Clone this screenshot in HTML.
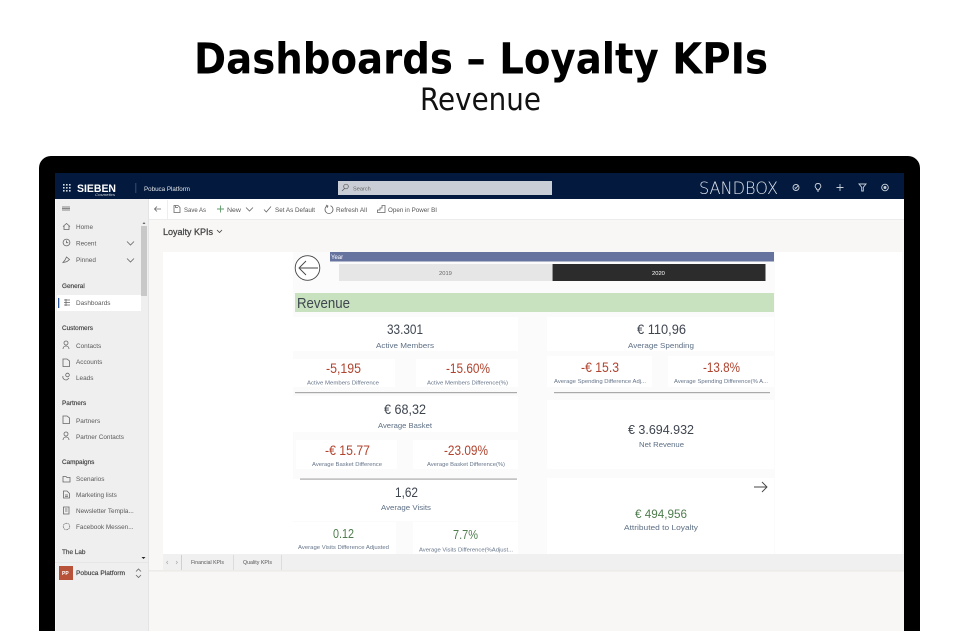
<!DOCTYPE html>
<html><head><meta charset="utf-8"><style>
html,body{margin:0;padding:0;background:#fff;width:960px;height:631px;overflow:hidden}
svg{display:block}
text{font-family:"Liberation Sans",sans-serif}
.n{font-size:6.4px;fill:#5a5a5a}
.h{font-size:6.4px;fill:#444;stroke:#444;stroke-width:.18}
.t{font-size:6.4px;fill:#555}
.big{font-size:13.5px;fill:#3f4650}
.lab{font-size:7.5px;fill:#5d6f85}
.sl{font-size:5.6px;fill:#66758a}
.red{font-size:13.5px;fill:#b0432e}
.grn{font-size:13px;fill:#4f7d4f}
.ic{fill:none;stroke:#666;stroke-width:.8}
.wi{fill:none;stroke:#c9d0da;stroke-width:.9}
.soft{filter:blur(.25px)}
</style></head><body>
<svg width="960" height="631" viewBox="0 0 960 631" xmlns="http://www.w3.org/2000/svg">
<rect width="960" height="631" fill="#fff"/>
<text x="194" y="73.500" textLength="574" lengthAdjust="spacingAndGlyphs" style="font-family:'DejaVu Sans',sans-serif;font-weight:bold;font-size:43px" fill="#000">Dashboards – Loyalty KPIs</text>
<text x="420" y="110" textLength="121" lengthAdjust="spacingAndGlyphs" style="font-family:'DejaVu Sans',sans-serif;font-size:31px" fill="#111">Revenue</text>

<path d="M39 631V168a12 12 0 0 1 12-12H908a12 12 0 0 1 12 12V631Z" fill="#000"/>
<g class="soft">
<rect x="55" y="173" width="849" height="458" fill="#f8f7f6"/>
<rect x="55" y="173" width="849" height="26" fill="#031a3e"/>

<!-- top bar -->
<g fill="#d5dae2"><rect x="63" y="184" width="1.6" height="1.6"/><rect x="66" y="184" width="1.6" height="1.6"/><rect x="69" y="184" width="1.6" height="1.6"/><rect x="63" y="187" width="1.6" height="1.6"/><rect x="66" y="187" width="1.6" height="1.6"/><rect x="69" y="187" width="1.6" height="1.6"/><rect x="63" y="190" width="1.6" height="1.6"/><rect x="66" y="190" width="1.6" height="1.6"/><rect x="69" y="190" width="1.6" height="1.6"/></g>
<text x="77" y="192" textLength="39" lengthAdjust="spacingAndGlyphs" style="font-size:11px;font-weight:bold" fill="#fff">SIEBEN</text>
<text x="95" y="196" textLength="20" lengthAdjust="spacingAndGlyphs" style="font-size:3.5px;font-style:italic" fill="#ddd">Cosmetics</text>
<rect x="135.500" y="183" width=".7" height="10" fill="#55627a"/>
<text x="144" y="191" textLength="46" lengthAdjust="spacingAndGlyphs" style="font-size:6.4px" fill="#e4e7ec">Pobuca Platform</text>
<rect x="338" y="181" width="214" height="14" fill="#c9ced6"/>
<circle cx="346" cy="186.500" r="2.300" fill="none" stroke="#555" stroke-width=".7"/><path d="M344.500 188.500l-2.500 2.500" stroke="#555" stroke-width=".7"/>
<text x="353" y="190.300" style="font-size:5.6px" fill="#666">Search</text>
<text x="699" y="194" textLength="79" lengthAdjust="spacingAndGlyphs" style="font-family:'DejaVu Sans',sans-serif;font-weight:200;font-size:16.500px" fill="#dfe4ec">SANDBOX</text>
<circle cx="796" cy="187.500" r="3" class="wi"/><path d="M794.700 187.500l1 1 2.700-3.200" class="wi"/>
<path d="M818 183.500a2.700 2.700 0 0 1 1.500 5l-.3 1.200h-2.400l-.3-1.200a2.700 2.700 0 0 1 1.500-5ZM817 191h2" class="wi"/>
<path d="M836.500 187.500h7M840 184v7" class="wi"/>
<path d="M859 184h7l-2.700 3.300V191h-1.600v-3.700Z" class="wi"/>
<circle cx="885" cy="187.500" r="3.300" class="wi"/><circle cx="885" cy="187.500" r="1.500" fill="#c9d0da"/>

<!-- sidebar -->
<rect x="55" y="199" width="93" height="432" fill="#efefef"/>
<rect x="55" y="199" width="1" height="432" fill="#f7f7f7"/>
<rect x="148" y="199" width=".8" height="432" fill="#e0e0e0"/>
<rect x="141" y="226" width="6" height="70" fill="#c8c8c8"/>
<path d="M142.500 224l1.500-2 1.500 2Z" fill="#666"/>
<path d="M141.500 557h4l-2 2Z" fill="#222"/>
<path d="M62 207h8M62 208.500h8M62 210h8" stroke="#666" stroke-width=".8"/>

<path d="M63 226.500l3.500-3 3.500 3M64 226v3.500h5V226" class="ic"/><text x="76" y="229" class="n">Home</text>
<circle cx="66.500" cy="242.500" r="3.400" class="ic"/><path d="M66.500 240.500v2.200h1.700" class="ic"/><text x="76" y="245.500" class="n">Recent</text>
<path d="M63 262.500l2-2.500 1.500-3 3 2.500-2.500 2-1.500.5Z" class="ic"/><text x="76" y="262" class="n">Pinned</text>
<path d="M127 241.500l3.500 3.500 3.500-3.500M127 258.500l3.500 3.500 3.500-3.500" class="ic"/>
<text x="62" y="288" class="h">General</text>
<rect x="57" y="295" width="84" height="16" fill="#fff"/>
<rect x="58" y="298" width="1.300" height="10" fill="#2b579a"/>
<path d="M64 300h6M64 302.500h6M64 305h6M66 299v7" class="ic"/><text x="76" y="305" class="n">Dashboards</text>

<text x="62" y="330" class="h">Customers</text>
<circle cx="66" cy="343" r="2" class="ic"/><path d="M63 349c0-4 6-4 6 0" class="ic"/><text x="76" y="348" class="n">Contacts</text>
<path d="M63 359h4l2.500 2v5.500h-6.500Z" class="ic"/><text x="76" y="364" class="n">Accounts</text>
<circle cx="67.500" cy="375" r="1.800" class="ic"/><path d="M63 376a3 3 0 0 0 5 3l1-1" class="ic"/><text x="76" y="380" class="n">Leads</text>

<text x="62" y="405" class="h">Partners</text>
<path d="M63 416h4l2.500 2v5.500h-6.500Z" class="ic"/><text x="76" y="423" class="n">Partners</text>
<circle cx="66" cy="434" r="2" class="ic"/><path d="M63 440c0-4 6-4 6 0" class="ic"/><text x="76" y="439" class="n">Partner Contacts</text>

<text x="62" y="464" class="h">Campaigns</text>
<path d="M63 476.500h3l1 1h3v4.500h-7Z" class="ic"/><text x="76" y="481" class="n">Scenarios</text>
<path d="M63.500 491h3.500l2.500 2.500v4.500h-6Z M65 495h3M65 496.500h3" class="ic"/><text x="76" y="497" class="n">Marketing lists</text>
<path d="M63.500 507h5.500v7h-5.500ZM65 509h2.500M65 511h2.500" class="ic"/><text x="76" y="513" class="n">Newsletter Templa...</text>
<circle cx="66.500" cy="526.500" r="3.200" class="ic" stroke-dasharray="1 .6"/><text x="76" y="529" class="n">Facebook Messen...</text>
<text x="62" y="554" class="h">The Lab</text>
<rect x="55" y="562" width="93" height=".7" fill="#e2e2e2"/>
<rect x="59" y="566" width="14" height="14" fill="#b85238"/>
<text x="62" y="575" style="font-size:5px;font-weight:bold" fill="#fff">PP</text>
<text x="76" y="575" textLength="49" lengthAdjust="spacingAndGlyphs" class="h">Pobuca Platform</text>
<path d="M136 571.500l2.500-2.500 2.500 2.500M136 575l2.500 2.500 2.500-2.500" class="ic"/>

<!-- toolbar -->
<rect x="149" y="199" width="755" height="20" fill="#fff"/>
<rect x="149" y="219" width="755" height=".7" fill="#e8e8e8"/>
<rect x="167" y="200" width=".6" height="19" fill="#e3e3e3"/>
<path d="M161 209h-6.500M157 206.500l-2.500 2.500 2.500 2.500" class="ic"/>
<path d="M174 205.500h4l2 2v5h-6Z M175.500 205.500v2h2.500" class="ic"/><text x="184" y="212" textLength="22" lengthAdjust="spacingAndGlyphs" class="t">Save As</text>
<path d="M217 209h7M220.500 205.500v7" fill="none" stroke="#5e9a6a" stroke-width=".9"/><text x="227" y="212" textLength="14" lengthAdjust="spacingAndGlyphs" class="t">New</text>
<path d="M246 207.500l3.500 3.500 3.500-3.500" class="ic"/>
<path d="M264 209.500l2.300 2.500 4.700-5.500" class="ic"/><text x="275" y="212" textLength="40" lengthAdjust="spacingAndGlyphs" class="t">Set As Default</text>
<path d="M327.500 205.800a4 4 0 1 0 3 0" class="ic"/><path d="M326 205l2 1-1 1.800" class="ic"/><text x="336" y="212" textLength="31" lengthAdjust="spacingAndGlyphs" class="t">Refresh All</text>
<path d="M377.500 212.500h7.500v-7h-3v2.500h-2v2h-2.500Z" class="ic"/><text x="388" y="212" textLength="49" lengthAdjust="spacingAndGlyphs" class="t">Open in Power BI</text>
<text x="163" y="235" textLength="50" lengthAdjust="spacingAndGlyphs" style="font-size:8.800px;stroke:#444;stroke-width:.25" fill="#444">Loyalty KPIs</text>
<path d="M217 230l2.500 2.500 2.500-2.500" fill="none" stroke="#444" stroke-width=".8"/>

<!-- report panel -->
<rect x="163" y="252" width="739" height="302" fill="#fff"/>
<rect x="293" y="252" width="482" height="302" fill="#fbfbfb"/>
<rect x="330" y="252" width="444" height="9.500" fill="#67739f"/>
<text x="331" y="259" style="font-size:6px" fill="#fff">Year</text>
<rect x="339" y="264" width="213" height="17" fill="#e6e6e6"/>
<rect x="552.500" y="264" width="213" height="17" fill="#2c2c2c"/>
<text x="439" y="275" style="font-size:5.800px" fill="#666">2019</text>
<text x="652" y="275" style="font-size:5.800px" fill="#fff">2020</text>
<circle cx="307.500" cy="268" r="12.300" fill="#fff" stroke="#444" stroke-width=".9"/>
<path d="M318 268h-18M306 261l-7 7 7 7" fill="none" stroke="#444" stroke-width=".9"/>
<rect x="295" y="293" width="479" height="19" fill="#c8e2bf"/>
<text x="297" y="308" textLength="53" lengthAdjust="spacingAndGlyphs" style="font-size:14.500px" fill="#3f4650">Revenue</text>

<g fill="#fff">
<rect x="293" y="317" width="225" height="34"/>
<rect x="293" y="359" width="102" height="28"/>
<rect x="416" y="359" width="102" height="28"/>
<rect x="293" y="396" width="225" height="36"/>
<rect x="296" y="440" width="101" height="29"/>
<rect x="413" y="440" width="105" height="29"/>
<rect x="293" y="479" width="225" height="42"/>
<rect x="293" y="522" width="103" height="32"/>
<rect x="413" y="522" width="105" height="32"/>
<rect x="547" y="317" width="227" height="34"/>
<rect x="547" y="356" width="105" height="31"/>
<rect x="668" y="356" width="106" height="31"/>
<rect x="547" y="400" width="227" height="69"/>
<rect x="547" y="478" width="227" height="76"/>
</g>
<rect x="295" y="392" width="222" height="1.200" fill="#aaa"/>
<rect x="554" y="392" width="216" height="1.200" fill="#aaa"/>
<rect x="300" y="478.500" width="217" height="1.200" fill="#aaa"/>

<text x="387" y="334" textLength="36" lengthAdjust="spacingAndGlyphs" class="big">33.301</text>
<text x="376" y="348" textLength="58" lengthAdjust="spacingAndGlyphs" class="lab">Active Members</text>
<text x="326" y="373" textLength="35" lengthAdjust="spacingAndGlyphs" class="red">-5,195</text>
<text x="307" y="384.500" textLength="72" lengthAdjust="spacingAndGlyphs" class="sl">Active Members Difference</text>
<text x="446" y="373" textLength="44" lengthAdjust="spacingAndGlyphs" class="red">-15.60%</text>
<text x="427" y="384.500" textLength="81" lengthAdjust="spacingAndGlyphs" class="sl">Active Members Difference(%)</text>
<text x="384" y="414" textLength="42" lengthAdjust="spacingAndGlyphs" class="big">€ 68,32</text>
<text x="378" y="428" textLength="54" lengthAdjust="spacingAndGlyphs" class="lab">Average Basket</text>
<text x="325" y="455" textLength="45" lengthAdjust="spacingAndGlyphs" class="red">-€ 15.77</text>
<text x="312" y="466" textLength="70" lengthAdjust="spacingAndGlyphs" class="sl">Average Basket Difference</text>
<text x="444" y="455" textLength="44" lengthAdjust="spacingAndGlyphs" class="red">-23.09%</text>
<text x="427" y="466" textLength="78" lengthAdjust="spacingAndGlyphs" class="sl">Average Basket Difference(%)</text>
<text x="395" y="497" textLength="23" lengthAdjust="spacingAndGlyphs" class="big">1,62</text>
<text x="381" y="510" textLength="50" lengthAdjust="spacingAndGlyphs" class="lab">Average Visits</text>
<text x="333" y="538" textLength="21" lengthAdjust="spacingAndGlyphs" class="grn">0.12</text>
<text x="298" y="549" textLength="91" lengthAdjust="spacingAndGlyphs" class="sl">Average Visits Difference Adjusted</text>
<text x="453" y="539" textLength="25" lengthAdjust="spacingAndGlyphs" class="grn">7.7%</text>
<text x="419" y="551.500" textLength="94" lengthAdjust="spacingAndGlyphs" class="sl">Average Visits Difference(%Adjust...</text>

<text x="637" y="334" textLength="49" lengthAdjust="spacingAndGlyphs" class="big">€ 110,96</text>
<text x="628" y="348" textLength="66" lengthAdjust="spacingAndGlyphs" class="lab">Average Spending</text>
<text x="581" y="372" textLength="38" lengthAdjust="spacingAndGlyphs" class="red">-€ 15.3</text>
<text x="554" y="383" textLength="92" lengthAdjust="spacingAndGlyphs" class="sl">Average Spending Difference Adj...</text>
<text x="703" y="372" textLength="37" lengthAdjust="spacingAndGlyphs" class="red">-13.8%</text>
<text x="674" y="383" textLength="94" lengthAdjust="spacingAndGlyphs" class="sl">Average Spending Difference(% A...</text>
<text x="628" y="434" textLength="66" lengthAdjust="spacingAndGlyphs" style="font-size:12.500px" fill="#3f4650">€ 3.694.932</text>
<text x="639" y="447" textLength="45" lengthAdjust="spacingAndGlyphs" style="font-size:7px" fill="#5d6f85">Net Revenue</text>
<path d="M754 487h13M762 482l5 5-5 5" fill="none" stroke="#444" stroke-width=".9"/>
<text x="635" y="518" textLength="52" lengthAdjust="spacingAndGlyphs" style="font-size:11.500px" fill="#4f7d4f">€ 494,956</text>
<text x="624" y="530" textLength="74" lengthAdjust="spacingAndGlyphs" style="font-size:7.500px" fill="#5d6f85">Attributed to Loyalty</text>

<!-- tabs -->
<rect x="163" y="554" width="741" height="16" fill="#f0f0f0"/>
<rect x="149" y="570.500" width="755" height=".8" fill="#e4e0dc"/>
<rect x="181" y="555" width=".8" height="15" fill="#c8c8c8"/>
<rect x="233" y="555" width=".8" height="15" fill="#d8d8d8"/>
<rect x="281" y="555" width=".8" height="15" fill="#d8d8d8"/>
<path d="M168 561l-1.500 1.500 1.500 1.500M176 561l1.500 1.500-1.500 1.500" fill="none" stroke="#aaa" stroke-width=".7"/>
<text x="191" y="564" textLength="33" lengthAdjust="spacingAndGlyphs" style="font-size:5.500px" fill="#555">Financial KPIs</text>
<text x="243" y="564" textLength="29" lengthAdjust="spacingAndGlyphs" style="font-size:5.500px" fill="#555">Quality KPIs</text>
</g>
</svg>
</body></html>
